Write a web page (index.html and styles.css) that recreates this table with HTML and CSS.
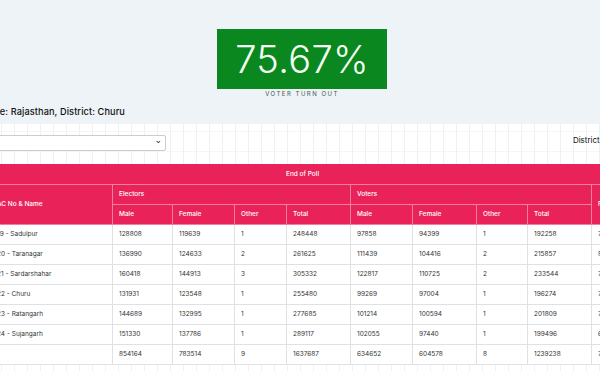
FILE: index.html
```html
<!DOCTYPE html>
<html>
<head>
<meta charset="utf-8">
<link rel="stylesheet" href="styles.css">
</head>
<body>
<div class="page">
  <section class="top">
    <div class="turnout">
      <div class="pct">75.67%</div>
      <div class="lbl">VOTER TURN OUT</div>
    </div>
    <h2 class="place">State: Rajasthan, District: Churu</h2>
  </section>
  <section class="main">
    <div class="filters">
      <div class="sel"><span class="chev">&#8964;</span></div>
      <span class="dist">District:</span>
    </div>
    <table class="grid">
      <colgroup>
        <col style="width:122px"><col style="width:60px"><col style="width:62px"><col style="width:52px"><col style="width:64px"><col style="width:62px"><col style="width:64px"><col style="width:51px"><col style="width:64px"><col style="width:23px">
      </colgroup>
      <thead>
        <tr><th colspan="10" class="center">End of Poll</th></tr>
        <tr><th rowspan="2">AC No &amp; Name</th><th colspan="4">Electors</th><th colspan="4">Voters</th><th rowspan="2">Poll %</th></tr>
        <tr><th>Male</th><th>Female</th><th>Other</th><th>Total</th><th>Male</th><th>Female</th><th>Other</th><th>Total</th></tr>
      </thead>
      <tbody>
        <tr><td>19 - Sadulpur</td><td>128808</td><td>119639</td><td>1</td><td>248448</td><td>97858</td><td>94399</td><td>1</td><td>192258</td><td>77.38</td></tr>
        <tr><td>20 - Taranagar</td><td>136990</td><td>124633</td><td>2</td><td>261625</td><td>111439</td><td>104416</td><td>2</td><td>215857</td><td>82.51</td></tr>
        <tr><td>21 - Sardarshahar</td><td>160418</td><td>144913</td><td>3</td><td>305332</td><td>122817</td><td>110725</td><td>2</td><td>233544</td><td>76.49</td></tr>
        <tr><td>22 - Churu</td><td>131931</td><td>123548</td><td>1</td><td>255480</td><td>99269</td><td>97004</td><td>1</td><td>196274</td><td>76.83</td></tr>
        <tr><td>23 - Ratangarh</td><td>144689</td><td>132995</td><td>1</td><td>277685</td><td>101214</td><td>100594</td><td>1</td><td>201809</td><td>72.68</td></tr>
        <tr><td>24 - Sujangarh</td><td>151330</td><td>137786</td><td>1</td><td>289117</td><td>102055</td><td>97440</td><td>1</td><td>199496</td><td>69.00</td></tr>
        <tr><td></td><td>854164</td><td>783514</td><td>9</td><td>1637687</td><td>634652</td><td>604578</td><td>8</td><td>1239238</td><td>75.67</td></tr>
      </tbody>
    </table>
  </section>
</div>
</body>
</html>
```

FILE: styles.css
```css
html, body {
  margin: 0;
  padding: 0;
  overflow: hidden;
  background: #ffffff;
  font-family: "Inter", "Open Sans", sans-serif;
}

.page {
  width: 652px;
  margin-left: -24px;
}

.top {
  background: #edf3f7;
  padding-top: 29px;
  height: 95px;
  display: flex;
  flex-direction: column;
  align-items: center;
  box-shadow: 0 1px 2px rgba(0,0,0,0.04);
}

.turnout {
  display: flex;
  flex-direction: column;
  align-items: center;
}

.pct {
  width: 170px;
  height: 60px;
  background: #0a871e;
  color: #f4fff4;
  font-size: 38px;
  font-weight: 300;
  display: flex;
  align-items: center;
  justify-content: center;
  letter-spacing: 0.3px;
}

.lbl {
  margin-top: 1px;
  font-size: 6px;
  letter-spacing: 1.5px;
  color: #3f5b4b;
  line-height: 8px;
}

.place {
  align-self: flex-start;
  margin: 8px 0 0 6px;
  font-size: 9.2px;
  font-weight: 500;
  color: #111;
  line-height: 12px;
  letter-spacing: 0.1px;
}

.main {
  padding: 11px 14px 0 14px;
  height: 236px;
  background-color: #ffffff;
  background-image:
    repeating-linear-gradient(90deg, transparent 0, transparent 12px, #eef1f4 12px, #eef1f4 13px),
    repeating-linear-gradient(0deg, transparent 0, transparent 19px, #f4f6f8 19px, #f4f6f8 20px);
}

.filters {
  width: 624px;
  display: flex;
  justify-content: space-between;
  align-items: center;
  height: 16px;
}

.sel {
  width: 171px;
  height: 14px;
  border: 1px solid #c9cdd2;
  border-radius: 2px;
  background: #fff;
  display: flex;
  justify-content: flex-end;
  align-items: center;
  padding-right: 3px;
  box-sizing: content-box;
}

.chev {
  font-size: 9px;
  line-height: 9px;
  color: #222;
  margin-top: -5px;
  font-family: "DejaVu Sans", sans-serif;
}

.dist {
  font-size: 8px;
  color: #111;
  padding-right: 12px;
  margin-top: -6px;
}

.grid {
  margin-top: 13px;
  width: 624px;
  border-collapse: collapse;
  table-layout: fixed;
  font-size: 6.5px;
  background: #fff;
}

.grid th {
  background: #e9235a;
  color: #fff;
  font-weight: 500;
  text-align: left;
  height: 20px;
  padding: 0 6px;
  border: 1px solid #f27f9e;
  white-space: nowrap;
  overflow: hidden;
  box-sizing: border-box;
}

.grid th.center {
  text-align: center;
  border-top: none;
}

.grid td {
  height: 20px;
  padding: 0 6px;
  color: #333;
  border: 1px solid #dfe1e4;
  white-space: nowrap;
  overflow: hidden;
  box-sizing: border-box;
}
```
